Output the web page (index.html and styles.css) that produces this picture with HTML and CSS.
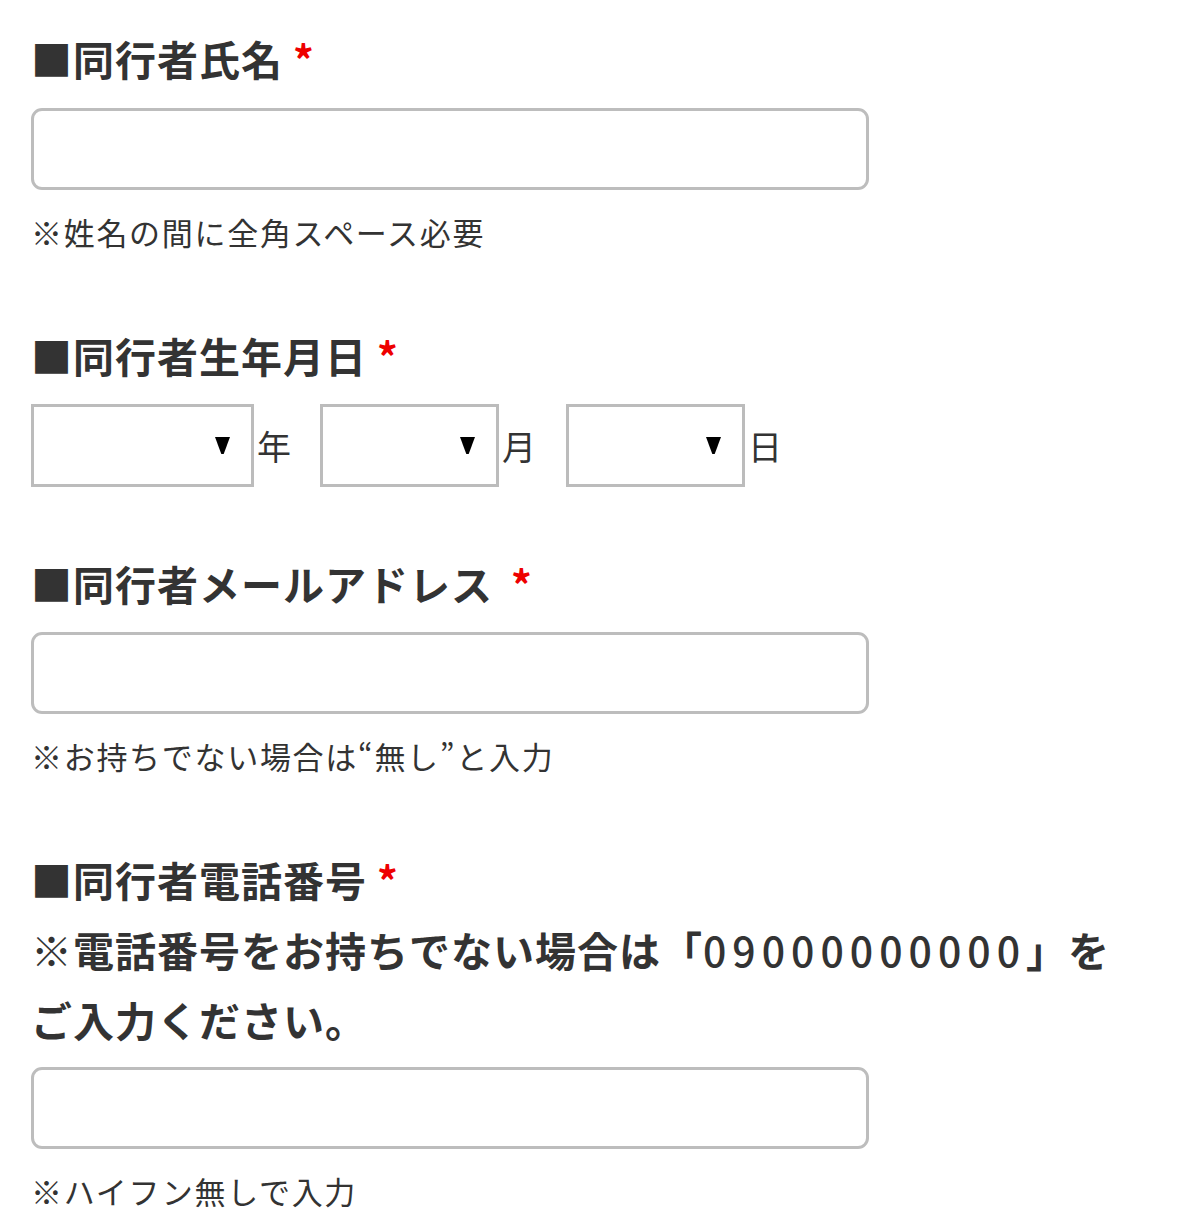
FILE: index.html
```html
<!DOCTYPE html>
<html lang="ja">
<head>
<meta charset="utf-8">
<title>同行者情報</title>
<link rel="stylesheet" href="styles.css">
</head>
<body>
<form class="form">
  <section class="field field-name">
    <h2 class="label">■同行者氏名<span class="req">*</span></h2>
    <input class="text-input" type="text">
    <p class="note">※姓名の間に全角スペース必要</p>
  </section>

  <section class="field field-birth">
    <h2 class="label">■同行者生年月日<span class="req">*</span></h2>
    <div class="date-row">
      <span class="select-wrap select-year"><select class="select"></select></span>
      <span class="unit unit-year">年</span>
      <span class="select-wrap select-month"><select class="select"></select></span>
      <span class="unit unit-month">月</span>
      <span class="select-wrap select-day"><select class="select"></select></span>
      <span class="unit">日</span>
    </div>
  </section>

  <section class="field field-mail">
    <h2 class="label">■同行者メールアドレス<span class="req req-wide">*</span></h2>
    <input class="text-input" type="text">
    <p class="note">※お持ちでない場合は“無し”と入力</p>
  </section>

  <section class="field field-tel">
    <h2 class="label">■同行者電話番号<span class="req">*</span></h2>
    <p class="label sublabel">※電話番号をお持ちでない場合は「<span class="digits">09000000000</span>」を</p>
    <p class="label sublabel">ご入力ください。</p>
    <input class="text-input text-input-tel" type="text">
    <p class="note">※ハイフン無しで入力</p>
  </section>
</form>
</body>
</html>
```

FILE: styles.css
```css
html, body {
  margin: 0;
  padding: 0;
  background: #ffffff;
}

body {
  font-family: "Noto Sans CJK JP", "Noto Sans", sans-serif;
  color: #333333;
}

.form {
  padding: 23px 0 0 31px;
  width: 1140px;
}

.field {
  display: flex;
  flex-direction: column;
  align-items: flex-start;
}

.label {
  margin: 0;
  font-size: 41px;
  line-height: 70px;
  font-weight: 700;
  letter-spacing: 1px;
  color: #333333;
  white-space: nowrap;
}

.req {
  color: #ee0000;
  margin-left: 10px;
}

.req-wide {
  margin-left: 18px;
}

.digits {
  letter-spacing: 6px;
  font-weight: 500;
}

.text-input {
  box-sizing: border-box;
  width: 838px;
  height: 82px;
  margin: 15px 0 0 0;
  border: 3px solid #bdbdbd;
  border-radius: 11px;
  background: #ffffff;
  padding: 0 16px;
  font-size: 30px;
  font-family: inherit;
  outline: none;
}

.field-mail .text-input {
  margin-top: 14px;
}

.text-input-tel {
  margin-top: 13px;
}

.note {
  margin: 20px 0 0;
  font-size: 31px;
  line-height: 44px;
  letter-spacing: 1.7px;
  color: #333333;
}

.field-birth {
  margin-top: 66px;
}

.field-mail {
  margin-top: 61px;
}

.field-tel {
  margin-top: 66px;
}

.date-row {
  display: flex;
  align-items: center;
  margin: 14px 0 0 0;
}

.select-wrap {
  position: relative;
  display: block;
}

.select-wrap::after {
  content: "";
  position: absolute;
  right: 24px;
  top: 33px;
  width: 15px;
  height: 17px;
  background: #000000;
  clip-path: polygon(0 0, 100% 0, 58% 100%, 42% 100%);
  pointer-events: none;
}

.select {
  display: block;
  box-sizing: border-box;
  height: 83px;
  border: 3px solid #bcbcbc;
  border-radius: 0;
  background: #ffffff;
  -webkit-appearance: none;
  appearance: none;
  margin: 0;
  font-size: 30px;
}

.select-year .select {
  width: 223px;
}

.select-month .select,
.select-day .select {
  width: 179px;
}

.unit {
  font-size: 34px;
  line-height: 40px;
  margin-left: 3px;
  color: #333333;
}

.unit-year {
  margin-right: 29px;
}

.unit-month {
  margin-right: 30px;
}
```
